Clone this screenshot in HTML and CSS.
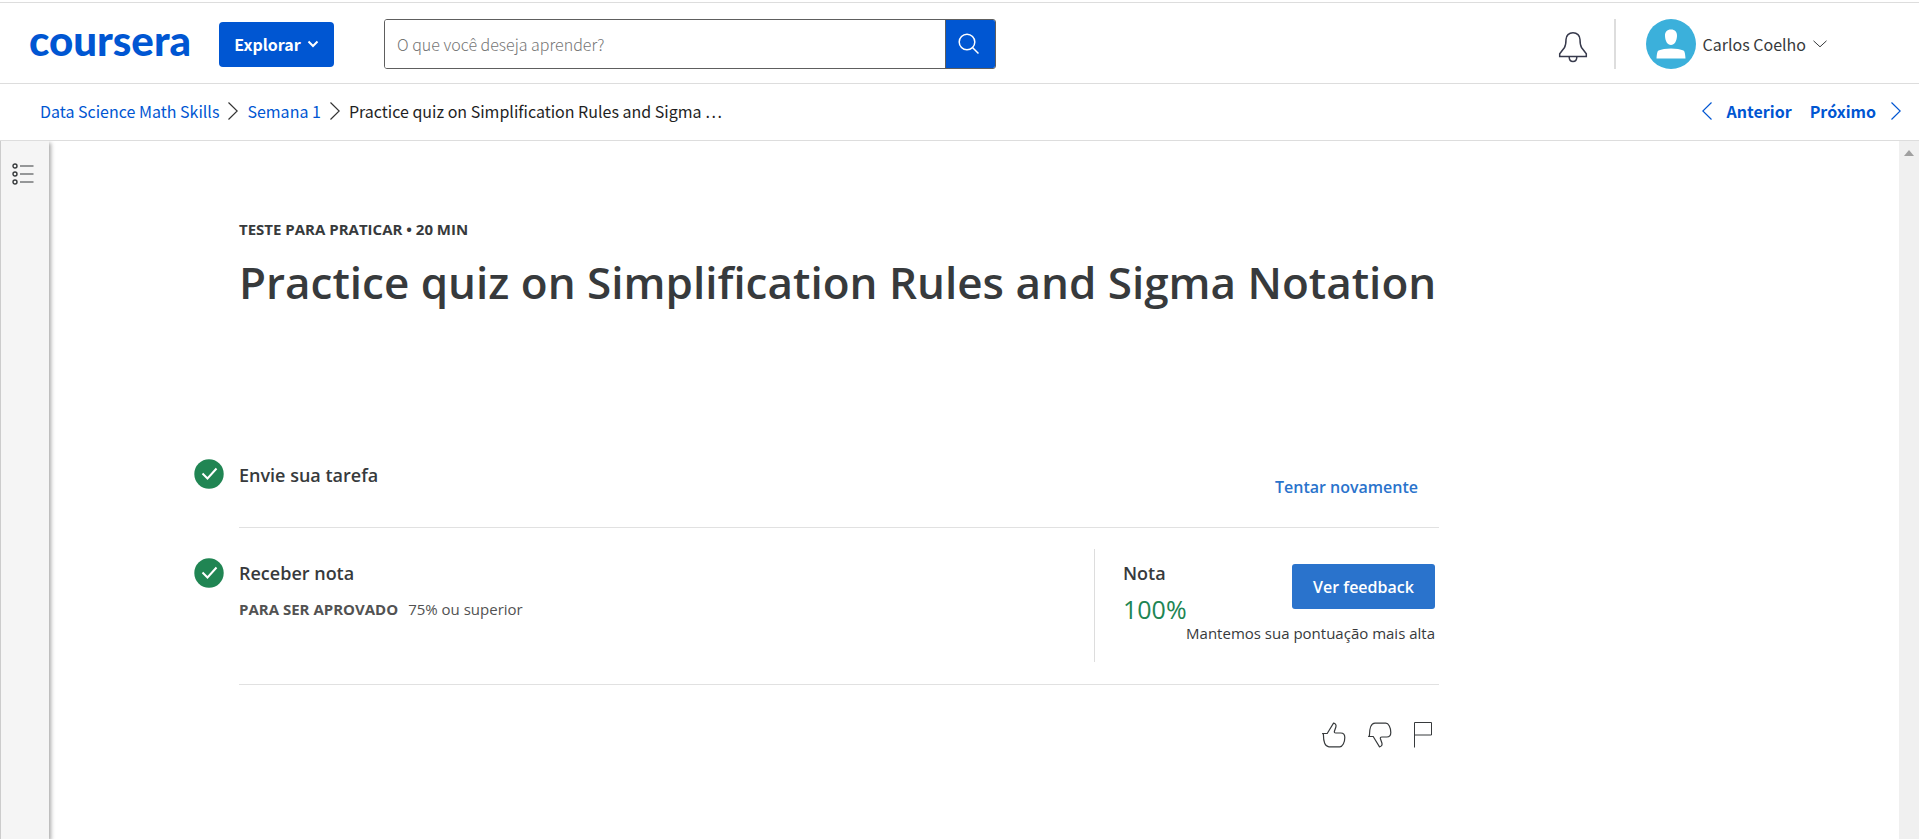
FILE: index.html
```html
<!DOCTYPE html>
<html lang="pt-BR">
<head>
<meta charset="utf-8">
<meta name="viewport" content="width=device-width, initial-scale=1">
<title>Practice quiz on Simplification Rules and Sigma Notation | Coursera</title>
<link rel="stylesheet" href="styles.css">
</head>
<body>
<header class="topbar">
  <a class="logo" href="#">coursera</a>
  <button class="explore" type="button">Explorar
    <svg width="12" height="8" viewBox="0 0 12 8"><path d="M1.5 1.5 6 6l4.500-4.500" fill="none" stroke="currentColor" stroke-width="2"/></svg>
  </button>
  <form class="search" role="search">
    <input class="search-input" type="text" aria-label="Pesquisar" placeholder="O que você deseja aprender?">
    <button class="search-button" type="button" aria-label="Buscar">
      <svg width="22" height="22" viewBox="0 0 22 22"><g fill="none" stroke="currentColor" stroke-width="1.500"><circle cx="9" cy="9" r="7.800"/><path d="m14.500 14.500 6 6"/></g></svg>
    </button>
  </form>
  <div class="account">
    <button class="bell" type="button" aria-label="Notificações">
      <svg width="30" height="32" viewBox="0 0 30 32"><g fill="none" stroke="currentColor" stroke-width="1.500"><path d="M1.700 25.500v-2.700l4.800-6.300C8 14 8 12 8 8.500c0-4 3-6.800 7-6.800s7 2.800 7 6.800c0 3.500 0 5.500 1.500 8l4.800 6.300v2.700z"/><path d="M11.200 26c0 2.800 1.500 4.500 3.800 4.500s3.800-1.700 3.800-4.500"/></g></svg>
    </button>
    <button class="profile" type="button">
      <svg class="avatar" width="50" height="50" viewBox="0 0 50 50"><circle cx="25" cy="25" r="25" fill="#3bb0db"/><path d="M25 10.500c4 0 6.200 2.500 6 6.500-.2 5-2.500 9-6 9s-5.800-4-6-9c-.2-4 2-6.500 6-6.500zM10.500 39.500c.3-4 .5-7 2-8 3-1.200 7.500-2 12.500-2s9.500.8 12.500 2c1.500 1 1.700 4 2 8z" fill="#fff"/></svg>
      <span>Carlos Coelho</span>
      <svg width="14" height="8" viewBox="0 0 14 8"><path d="m.5.8 6.500 6 6.500-6" fill="none" stroke="currentColor"/></svg>
    </button>
  </div>
</header>

<nav class="crumbs" aria-label="Navegação do curso">
  <a href="#">Data Science Math Skills</a>
  <svg class="sep" width="10" height="18" viewBox="0 0 10 18"><path d="m.5.5 8.700 8.500-8.700 8.500" fill="none" stroke="currentColor" stroke-width="1.200"/></svg>
  <a href="#">Semana 1</a>
  <svg class="sep" width="10" height="18" viewBox="0 0 10 18"><path d="m.5.5 8.700 8.500-8.700 8.500" fill="none" stroke="currentColor" stroke-width="1.200"/></svg>
  <span>Practice quiz on Simplification Rules and Sigma …</span>
  <div class="pager">
    <a href="#"><svg width="10" height="18" viewBox="0 0 10 18"><path d="M9.500.5.800 9l8.700 8.500" fill="none" stroke="currentColor" stroke-width="1.200"/></svg>Anterior</a>
    <a href="#">Próximo<svg width="10" height="18" viewBox="0 0 10 18"><path d="m.5.5 8.700 8.500-8.700 8.500" fill="none" stroke="currentColor" stroke-width="1.200"/></svg></a>
  </div>
</nav>

<div class="body">
  <aside class="rail">
    <button class="rail-button" type="button" aria-label="Conteúdo do curso">
      <svg width="22" height="22" viewBox="0 0 22 22"><g fill="none" stroke="currentColor" stroke-width="1.400"><circle cx="3" cy="3" r="2"/><circle cx="3" cy="11" r="2"/><circle cx="3" cy="19" r="2"/></g><path d="M8 2.500h13.500v1H8zM8 10.500h13.500v1H8zM8 18.500h13.500v1H8z" fill="currentColor"/></svg>
    </button>
  </aside>
  <main class="content">
    <p class="kind">TESTE PARA PRATICAR • 20 MIN</p>
    <h1 class="title">Practice quiz on Simplification Rules and Sigma Notation</h1>

    <section class="step submit">
      <svg class="check" width="30" height="30" viewBox="0 0 30 30"><circle cx="15" cy="15" r="14.700" fill="#208553"/><path d="m8.500 14.500 5 5 9-10" fill="none" stroke="#fff" stroke-width="2"/></svg>
      <h2 class="heading">Envie sua tarefa</h2>
      <a class="retry" href="#">Tentar novamente</a>
    </section>

    <section class="step grade">
      <svg class="check" width="30" height="30" viewBox="0 0 30 30"><circle cx="15" cy="15" r="14.700" fill="#208553"/><path d="m8.500 14.500 5 5 9-10" fill="none" stroke="#fff" stroke-width="2"/></svg>
      <div class="receive">
        <h2 class="heading">Receber nota</h2>
        <p class="pass"><strong>PARA SER APROVADO</strong><span>75% ou superior</span></p>
      </div>
      <div class="score">
        <div>
          <h2 class="heading">Nota</h2>
          <p class="percent">100%</p>
        </div>
        <div class="feedback">
          <button class="feedback-button" type="button">Ver feedback</button>
          <p class="note">Mantemos sua pontuação mais alta</p>
        </div>
      </div>
    </section>

    <div class="reactions">
      <button type="button" aria-label="Gostei">
        <svg width="24" height="26" viewBox="0 0 24 26"><path d="M.8 11.500h4.400L11.500 1.200c2 .2 3 1.800 2.300 4L12.500 9c-.4 1.300 0 2 1.300 2h5c2.500 0 4 1.500 4 4.500 0 5-2.300 9.300-5 9.300H7c-4 0-5.600-5-5.600-12.500z" fill="none" stroke="currentColor" stroke-width="1.200"/></svg>
      </button>
      <button type="button" aria-label="Não gostei">
        <svg width="24" height="26" viewBox="0 0 24 26"><path d="M.8 14.500h4.400l6.300 10.300c2-.2 3-1.800 2.300-4L12.500 17c-.4-1.300 0-2 1.300-2h5c2.500 0 4-1.500 4-4.500 0-5-2.300-9.300-5-9.300H7c-4 0-5.600 5-5.600 12.500z" fill="none" stroke="currentColor" stroke-width="1.200"/></svg>
      </button>
      <button type="button" aria-label="Denunciar">
        <svg width="18" height="26" viewBox="0 0 18 26"><path d="M.5 25.500V.5h17v12.500H.5" fill="none" stroke="currentColor"/></svg>
      </button>
    </div>
  </main>
  <div class="scrollbar"><svg width="10" height="6" viewBox="0 0 10 6"><path d="M0 6 5 0l5 6z" fill="#a0a0a0"/></svg></div>
</div>
</body>
</html>
```
FILE: styles.css
```css
* { box-sizing: border-box; }

body {
  margin: 0;
  min-height: 100vh;
  display: flex;
  flex-direction: column;
  padding-top: 2px;
  background: #fff;
  color: #373a3c;
  font-family: "Open Sans", sans-serif;
}

h1, h2, p { margin: 0; }
svg { display: block; flex: none; }
a { text-decoration: none; }

button {
  padding: 0;
  border: 0;
  background: none;
  color: inherit;
  font: inherit;
  cursor: pointer;
}

.topbar, .crumbs {
  display: flex;
  align-items: center;
  font-family: "Noto Sans CJK SC", "Noto Sans", sans-serif;
  font-size: 16px;
  line-height: 24px;
}

.topbar {
  height: 82px;
  padding: 0 92px 0 29px;
  border-top: 1px solid #ddd;
  border-bottom: 1px solid #ddd;
}

.logo {
  width: 190px;
  padding-bottom: 6px;
  color: #0056d2;
  font-family: Lato, sans-serif;
  font-size: 42px;
  font-weight: 900;
  line-height: 40px;
}

.explore {
  display: flex;
  align-items: center;
  justify-content: center;
  gap: 6px;
  width: 115px;
  height: 45px;
  margin: 2px 50px 0 0;
  border-radius: 4px;
  background: #0056d2;
  color: #fff;
  font-weight: 700;
}

.search {
  display: flex;
  flex: 0 1 612px;
  height: 50px;
  margin-top: 2px;
  border: 1px solid #5e5e5e;
  border-radius: 3px;
  overflow: hidden;
}

.search-input {
  flex: 1;
  min-width: 0;
  padding: 0 12px;
  border: 0;
  font: 300 16px "Noto Sans CJK SC", "Noto Sans", sans-serif;
}
.search-input::placeholder { color: #757575; opacity: 1; }

.search-button {
  display: flex;
  align-items: center;
  width: 50px;
  padding-left: 12px;
  border-left: 1px solid #5e5e5e;
  background: #0056d2;
  color: #fff;
}

.account {
  display: flex;
  align-items: center;
  margin: 2px 0 0 auto;
}

.bell {
  padding: 6px 26px 0 0;
  color: #373a4c;
}

.profile {
  display: flex;
  align-items: center;
  gap: 7px;
  padding-left: 30px;
  border-left: 2px solid #ddd;
}

.crumbs {
  height: 57px;
  padding: 0 18px 2px 40px;
  gap: 9px;
  border-bottom: 1px solid #ddd;
  color: #1f1f1f;
}
.crumbs a { color: #0056d2; }
.sep { color: #333; }

.pager {
  display: flex;
  gap: 18px;
  margin-left: auto;
  font-weight: 700;
}
.pager a {
  display: flex;
  align-items: center;
  gap: 15px;
}

.body {
  display: flex;
  flex: 1;
}

.rail {
  width: 49px;
  padding: 22px 0 0 11px;
  border-left: 1px solid #ccc;
  background: #f5f5f5;
  box-shadow: 2px 2px 4px #aaa;
  clip-path: inset(0 -8px 0 0);
}

.content {
  flex: 0 1 1200px;
  padding-top: 76px;
  margin-left: 190px;
}

.kind {
  font-size: 15px;
  font-weight: 700;
  line-height: 24px;
}

.title {
  margin-top: 11px;
  font-size: 44px;
  font-weight: 600;
  line-height: 60px;
}

.step {
  display: flex;
  margin-left: -45px;
  position: relative;
}
.step::after {
  content: "";
  position: absolute;
  left: 45px;
  right: 0;
  bottom: 0;
  border-bottom: 1px solid #e1e1e1;
}

.check { margin-right: 15px; }

.heading {
  font-size: 18px;
  font-weight: 600;
  line-height: 24px;
}

.submit {
  height: 69px;
  margin-top: 147px;
}
.submit .heading { padding-top: 4px; }

.retry {
  margin: 16px 21px 0 auto;
  color: #2a73cc;
  font-size: 16px;
  font-weight: 600;
  line-height: 24px;
}

.grade {
  padding: 21px 0 23px;
}
.grade .check { margin-top: 9px; }

.receive { padding-top: 12px; }

.pass {
  display: flex;
  gap: 10px;
  padding-top: 12px;
  color: #525252;
  font-size: 15px;
  line-height: 24px;
}

.score {
  display: flex;
  width: 345px;
  height: 113px;
  margin-left: auto;
  padding: 12px 4px 0 28px;
  border-left: 1px solid #ddd;
}

.percent {
  width: 0;
  padding-top: 8px;
  color: #208553;
  font-size: 25px;
  line-height: 32px;
}

.feedback {
  margin: 3px 0 0 auto;
  text-align: right;
  white-space: nowrap;
}

.feedback-button {
  width: 143px;
  height: 45px;
  border-radius: 3px;
  background: #2a73cc;
  color: #fff;
  font-size: 16px;
  font-weight: 600;
}

.note {
  padding-top: 12px;
  font-size: 15px;
  line-height: 24px;
}

.reactions {
  display: flex;
  justify-content: flex-end;
  gap: 22px;
  padding: 37px 7px 0 0;
}

.scrollbar {
  width: 20px;
  margin-left: auto;
  padding: 9px 5px 0;
  background: #f0f0f0;
}
```
